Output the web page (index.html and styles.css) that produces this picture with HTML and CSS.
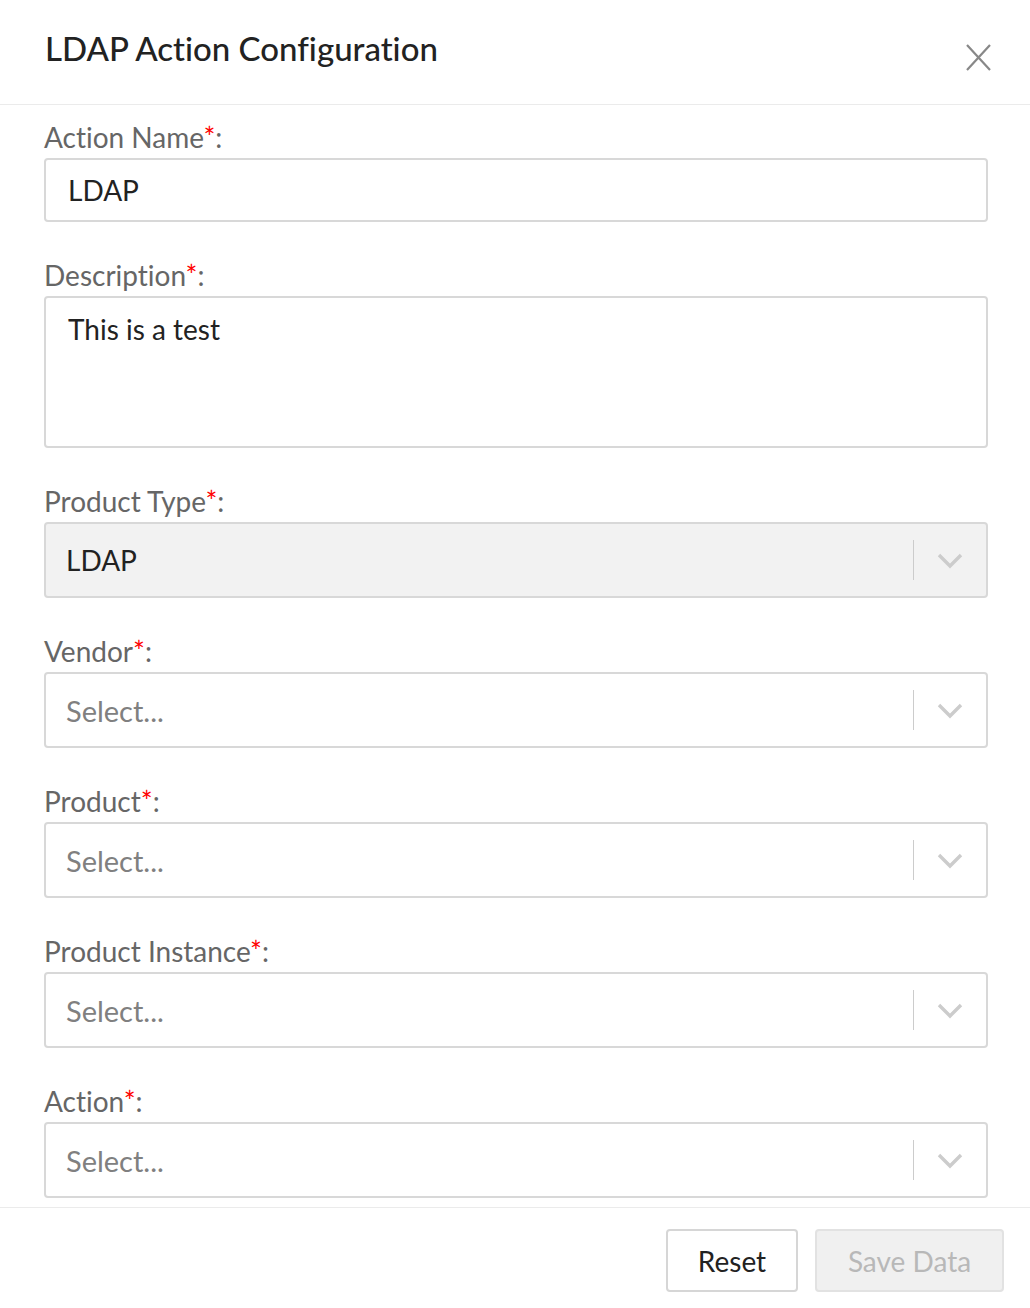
FILE: index.html
```html
<!DOCTYPE html>
<html>
<head>
<meta charset="utf-8">
<link rel="stylesheet" href="styles.css">
</head>
<body>
<div class="modal">
  <header class="modal-header">
    <h1 class="modal-title">LDAP Action Configuration</h1>
    <button class="close" aria-label="Close">
      <svg width="25" height="27" viewBox="0 0 25 27"><path d="M1 1 L24 26 M24 1 L1 26" stroke="#888" stroke-width="2.2" fill="none"/></svg>
    </button>
  </header>
  <main class="modal-body">
    <div class="field">
      <label class="label">Action Name<span class="req">*</span>:</label>
      <div class="input">LDAP</div>
    </div>
    <div class="field">
      <label class="label">Description<span class="req">*</span>:</label>
      <div class="textarea">This is a test</div>
    </div>
    <div class="field">
      <label class="label">Product Type<span class="req">*</span>:</label>
      <div class="select disabled">
        <span class="value">LDAP</span>
        <span class="sep"></span>
        <span class="chev"><svg width="26" height="16" viewBox="0 0 26 16"><path d="M2 2 L13 13 L24 2" stroke="#ccc" stroke-width="3.4" fill="none"/></svg></span>
      </div>
    </div>
    <div class="field">
      <label class="label">Vendor<span class="req">*</span>:</label>
      <div class="select">
        <span class="placeholder">Select...</span>
        <span class="sep"></span>
        <span class="chev"><svg width="26" height="16" viewBox="0 0 26 16"><path d="M2 2 L13 13 L24 2" stroke="#ccc" stroke-width="3.4" fill="none"/></svg></span>
      </div>
    </div>
    <div class="field">
      <label class="label">Product<span class="req">*</span>:</label>
      <div class="select">
        <span class="placeholder">Select...</span>
        <span class="sep"></span>
        <span class="chev"><svg width="26" height="16" viewBox="0 0 26 16"><path d="M2 2 L13 13 L24 2" stroke="#ccc" stroke-width="3.4" fill="none"/></svg></span>
      </div>
    </div>
    <div class="field">
      <label class="label">Product Instance<span class="req">*</span>:</label>
      <div class="select">
        <span class="placeholder">Select...</span>
        <span class="sep"></span>
        <span class="chev"><svg width="26" height="16" viewBox="0 0 26 16"><path d="M2 2 L13 13 L24 2" stroke="#ccc" stroke-width="3.4" fill="none"/></svg></span>
      </div>
    </div>
    <div class="field last">
      <label class="label">Action<span class="req">*</span>:</label>
      <div class="select">
        <span class="placeholder">Select...</span>
        <span class="sep"></span>
        <span class="chev"><svg width="26" height="16" viewBox="0 0 26 16"><path d="M2 2 L13 13 L24 2" stroke="#ccc" stroke-width="3.4" fill="none"/></svg></span>
      </div>
    </div>
  </main>
  <footer class="modal-footer">
    <button class="btn btn-reset">Reset</button>
    <button class="btn btn-disabled">Save Data</button>
  </footer>
</div>
</body>
</html>
```
FILE: styles.css
```css
* { box-sizing: border-box; }
html, body { margin: 0; padding: 0; background: #fff; }
body {
  font-family: "Lato", "Open Sans", sans-serif;
  color: #222;
  font-variant-ligatures: none;
}
.modal { width: 1030px; height: 1308px; display: flex; flex-direction: column; overflow: hidden; }
.modal-header {
  flex: 0 0 105px;
  border-bottom: 1px solid #ebebeb;
  display: flex;
  align-items: flex-start;
  justify-content: space-between;
  padding: 0 39px 0 45px;
}
.modal-title {
  margin: 28px 0 0;
  font-size: 33px;
  font-weight: 500;
  color: #222;
}
.close {
  margin-top: 44px;
  border: 0;
  background: none;
  padding: 0;
  width: 25px;
  height: 27px;
  display: flex;
}
.modal-body { flex: 0 0 auto; padding: 17px 42px 9px 44px; }
.field { margin-bottom: 38px; }
.field.last { margin-bottom: 0; }
.label {
  display: block;
  font-size: 28px;
  line-height: 30px;
  color: #666;
  margin-bottom: 6px;
}
.req { color: #ff0000; }
.input, .textarea, .select {
  border: 2px solid #d8d8d8;
  border-radius: 4px;
  background: #fff;
  font-size: 28px;
  color: #222;
}
.input { height: 64px; padding: 0 22px; display: flex; align-items: center; }
.textarea { height: 152px; padding: 13px 22px; line-height: 36px; }
.select {
  height: 76px;
  display: flex;
  align-items: center;
  padding-left: 20px;
}
.select.disabled { background: #f2f2f2; }
.value, .placeholder { flex: 1; }
.placeholder { color: #808080; font-size: 29px; }
.sep { width: 1px; height: 40px; background: #ccc; }
.chev { width: 72px; display: flex; justify-content: center; padding-top: 2px; }
.modal-footer {
  flex: 1 0 auto;
  border-top: 1px solid #ebebeb;
  display: flex;
  justify-content: flex-end;
  align-items: flex-start;
  gap: 17px;
  padding: 21px 26px 0 0;
}
.btn {
  height: 63px;
  border: 2px solid #d6d6d6;
  border-radius: 4px;
  background: #fff;
  font-family: "Lato", "Open Sans", sans-serif;
  font-variant-ligatures: none;
  font-size: 28px;
  color: #222;
  padding: 0;
}
.btn-reset { width: 132px; }
.btn-disabled {
  background: #f0f0f0;
  border-color: #e2e2e2;
  color: #b8b8b8;
  width: 189px;
}
```
